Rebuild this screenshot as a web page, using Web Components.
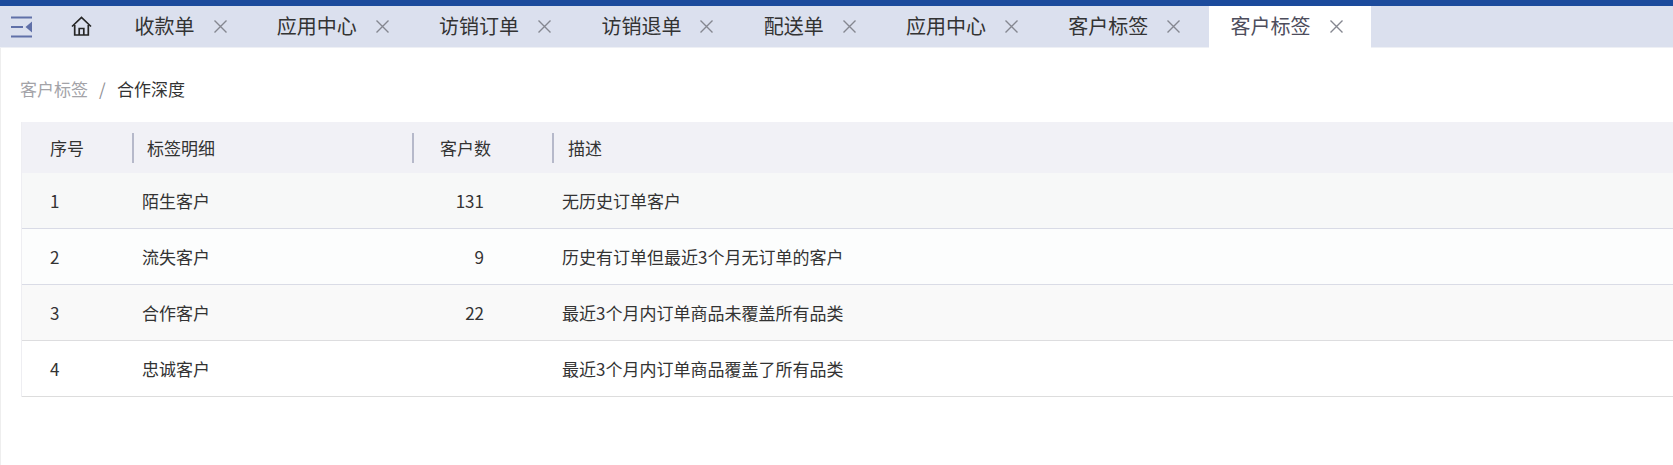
<!DOCTYPE html>
<html lang="zh-CN">
<head>
<meta charset="utf-8">
<title>客户标签</title>
<style>
  html, body { margin: 0; background: #fff; }
  body { font-family: "Noto Sans CJK SC", "Noto Sans", sans-serif; color: #333; }
</style>
</head>
<body>
<app-shell>
  <tab-bar slot="tabs">
    <tab-item>收款单</tab-item>
    <tab-item>应用中心</tab-item>
    <tab-item>访销订单</tab-item>
    <tab-item>访销退单</tab-item>
    <tab-item>配送单</tab-item>
    <tab-item>应用中心</tab-item>
    <tab-item>客户标签</tab-item>
    <tab-item active>客户标签</tab-item>
  </tab-bar>
  <bread-crumb parent="客户标签" current="合作深度"></bread-crumb>
  <tag-table>
    <tag-row head><span>序号</span><span>标签明细</span><span>客户数</span><span>描述</span></tag-row>
    <tag-row tone="#f7f8f8" line="#d9dbe6"><span>1</span><span>陌生客户</span><span>131</span><span>无历史订单客户</span></tag-row>
    <tag-row tone="#fcfdfd" line="#dadce6"><span>2</span><span>流失客户</span><span>9</span><span>历史有订单但最近3个月无订单的客户</span></tag-row>
    <tag-row tone="#f9f9f9" line="#dddddf"><span>3</span><span>合作客户</span><span>22</span><span>最近3个月内订单商品未覆盖所有品类</span></tag-row>
    <tag-row tone="#ffffff" line="#dddddd"><span>4</span><span>忠诚客户</span><span></span><span>最近3个月内订单商品覆盖了所有品类</span></tag-row>
  </tag-table>
</app-shell>

<script>
class AppShell extends HTMLElement {
  constructor() {
    super();
    this.attachShadow({ mode: 'open' });
    this.shadowRoot.innerHTML = `
    <style>
      :host { display: block; height: 465px; overflow: hidden; }
      .top { height: 6px; background: #1c4b9c; }
      main { height: 417px; border-left: 1px solid #eeeeee; padding-left: 20px; }
    </style>
    <div class="top"></div>
    <slot name="tabs"></slot>
    <main><slot></slot></main>
    `;
  }
}

class TabBar extends HTMLElement {
  constructor() {
    super();
    this.attachShadow({ mode: 'open' });
    this.shadowRoot.innerHTML = `
    <style>
      :host { display: flex; height: 41px; background: #dbe0ee; border-bottom: 1px solid #eef0f5; }
      .menu { width: 49px; display: flex; align-items: center; padding-left: 11px; box-sizing: border-box; }
      .home { width: 63.5px; display: flex; align-items: center; padding-left: 22px; box-sizing: border-box; }
      svg { display: block; }
    </style>
    <div class="menu">
      <svg width="22" height="22" viewBox="0 0 22 22" fill="none" stroke="#6070a8" stroke-width="2">
        <path d="M0 1.500h21M0 11h12M0 20.500h21"/>
        <path d="M21 5.500v11l-6.500-5.500z" fill="#6070a8" stroke="none"/>
      </svg>
    </div>
    <div class="home">
      <svg width="21" height="21" viewBox="0 0 21 21" fill="none" stroke="#262626" stroke-width="1.7" stroke-linejoin="miter">
        <path d="M1 10.500 10.500 1.500 20 10.500"/>
        <path d="M3.700 9v10h13.600V9"/>
        <path d="M8.200 19v-6.500h4.600V19"/>
      </svg>
    </div>
    <slot></slot>
    `;
  }
}

class TabItem extends HTMLElement {
  constructor() {
    super();
    this.attachShadow({ mode: 'open' });
    this.shadowRoot.innerHTML = `
    <style>
      :host { display: flex; align-items: center; height: 42px; padding: 0 28.3px 0 22px; font-size: 20px; color: #333; background: transparent; }
      :host([active]) { background: #fff; color: #4d4d5c; }
      .label { white-space: nowrap; line-height: 40px; margin-top: -2px; }
      svg { display: block; margin-left: 19px; margin-top: -2px; }
    </style>
    <span class="label"><slot></slot></span>
    <svg width="13" height="13" viewBox="0 0 13 13" fill="none" stroke="#858790" stroke-width="1.4"><path d="M.5.5 12.500 12.500M12.500.5.5 12.500"/></svg>
    `;
  }
}

class BreadCrumb extends HTMLElement {
  constructor() {
    super();
    this.attachShadow({ mode: 'open' });
    this.shadowRoot.innerHTML = `
    <style>
      :host { display: flex; height: 74px; padding-top: 25px; margin-left: -1px; box-sizing: border-box; font-size: 17px; line-height: 32px; color: #333; }
      .parent { color: #a3a3a8; }
      .sep { color: #8f8f94; margin: 0 12px 0 11px; width: 6px; }
    </style>
    <span class="parent">${this.getAttribute('parent') || ''}</span>
    <span class="sep">/</span>
    <span>${this.getAttribute('current') || ''}</span>
    `;
  }
}

class TagTable extends HTMLElement {
  constructor() {
    super();
    this.attachShadow({ mode: 'open' });
    this.shadowRoot.innerHTML = `
    <style>
      :host { display: block; border-left: 1px solid #eeeef2; }
    </style>
    <slot></slot>
    `;
  }
}

class TagRow extends HTMLElement {
  constructor() {
    super();
    this.attachShadow({ mode: 'open' });
    this.shadowRoot.innerHTML = `
    <style>
      :host {
        display: grid;
        grid-template-columns: 110px 280px 140px 1fr;
        height: 56px;
        box-sizing: border-box;
        align-items: center;
        font-size: 17px;
        color: #333;
        background: var(--tone, #fff);
        border-bottom: 1px solid var(--line, #ddd);
      }
      :host([head]) { height: 51px; background: #f1f1f6; border-bottom: 0; }
      ::slotted(span) { display: block; height: 30px; line-height: 30px; white-space: nowrap; box-sizing: border-box; }
      ::slotted(span:nth-child(1)) { padding-left: 28px; }
      ::slotted(span:nth-child(2)) { padding-left: 10px; }
      ::slotted(span:nth-child(3)) { text-align: right; padding-right: 68px; }
      ::slotted(span:nth-child(4)) { padding-left: 10px; }
      :host([head]) ::slotted(span:not(:first-child)) { border-left: 2px solid #b6b9ca; }
      :host([head]) ::slotted(span:nth-child(2)) { padding-left: 13px; }
      :host([head]) ::slotted(span:nth-child(3)) { text-align: left; padding: 0 0 0 26px; }
      :host([head]) ::slotted(span:nth-child(4)) { padding-left: 14px; }
    </style>
    <slot></slot>
    `;
    this.style.setProperty('--tone', this.getAttribute('tone') || '#fff');
    this.style.setProperty('--line', this.getAttribute('line') || '#ddd');
  }
}

customElements.define('app-shell', AppShell);
customElements.define('tab-bar', TabBar);
customElements.define('tab-item', TabItem);
customElements.define('bread-crumb', BreadCrumb);
customElements.define('tag-table', TagTable);
customElements.define('tag-row', TagRow);
</script>
</body>
</html>
